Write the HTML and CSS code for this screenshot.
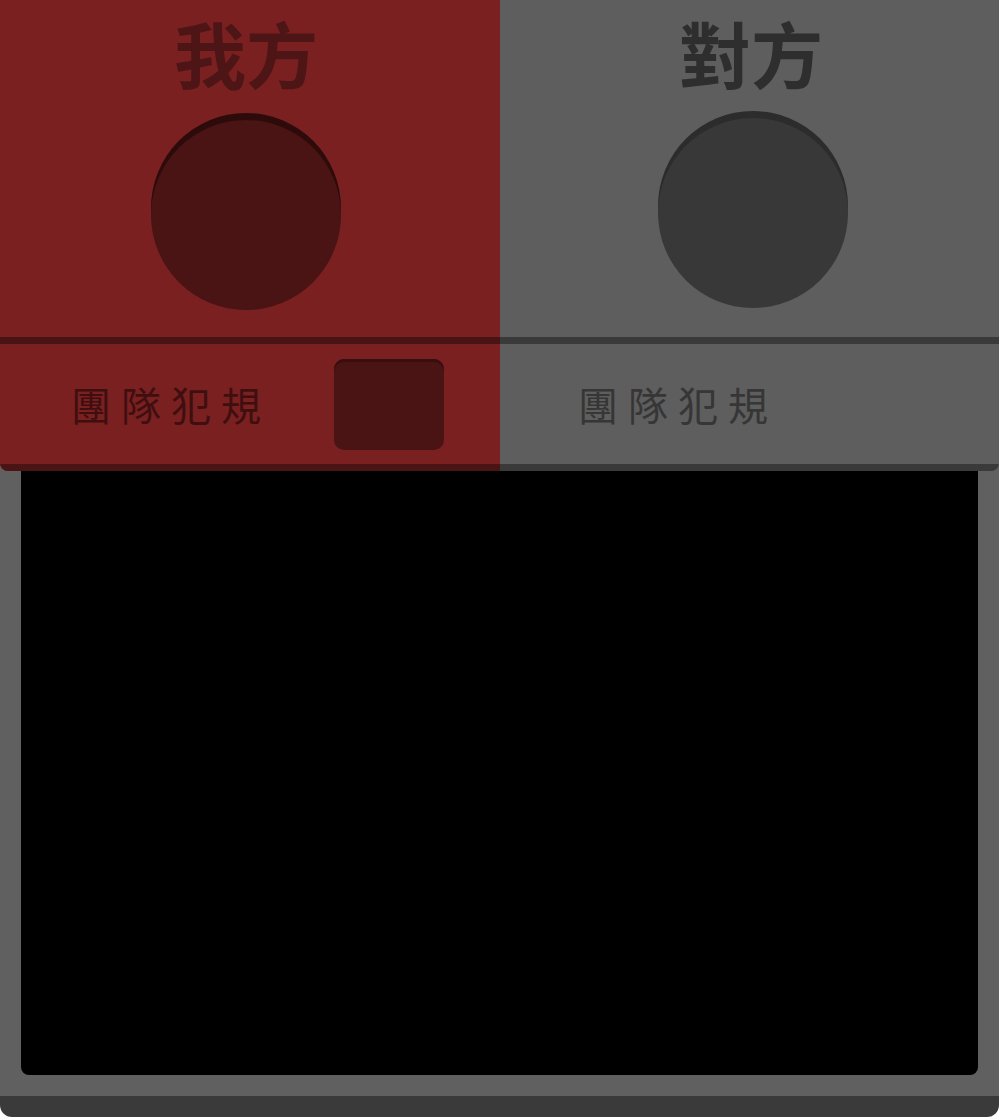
FILE: index.html
```html
<!DOCTYPE html>
<html lang="zh-Hant">
<head>
<meta charset="utf-8">
<title>Scoreboard</title>
<link rel="stylesheet" href="styles.css">
</head>
<body>
<div class="device">
  <div class="header">
    <div class="side side-home">
      <div class="side-top">
        <div class="title">我方</div>
        <div class="score-dot"></div>
      </div>
      <div class="side-bottom">
        <div class="fouls">團隊犯規</div>
        <div class="foul-box"></div>
      </div>
    </div>
    <div class="side side-away">
      <div class="side-top">
        <div class="title">對方</div>
        <div class="score-dot"></div>
      </div>
      <div class="side-bottom">
        <div class="fouls">團隊犯規</div>
      </div>
    </div>
  </div>
  <div class="screen"></div>
</div>
</body>
</html>
```
FILE: styles.css
```css
html, body {
  margin: 0;
  padding: 0;
  background: #ffffff;
}
body {
  font-family: "Noto Sans CJK TC", "Noto Sans CJK SC", sans-serif;
}
.device {
  width: 999px;
  height: 1117px;
  box-sizing: border-box;
  background: #606060;
  border-bottom: 21px solid #3a3a3a;
  border-radius: 0 0 12px 12px;
  padding-bottom: 21px;
  display: flex;
  flex-direction: column;
}
.header {
  display: flex;
  border-radius: 0 0 8px 8px;
  overflow: hidden;
}
.side {
  display: flex;
  flex-direction: column;
}
.side-home {
  width: 500px;
  background: #7a2020;
}
.side-away {
  width: 499px;
  background: #5e5e5e;
}
.side-top {
  height: 344px;
  box-sizing: border-box;
  display: flex;
  flex-direction: column;
  align-items: center;
  padding-top: 16px;
}
.side-home .side-top {
  padding-right: 8px;
  border-bottom: 7px solid #4a1314;
}
.side-away .side-top {
  padding-left: 3px;
  border-bottom: 7px solid #3a3a3a;
}
.title {
  font-size: 72px;
  line-height: 72px;
  font-weight: 700;
  height: 72px;
}
.side-home .title { color: #4d1516; }
.side-away .title { color: #2e2e2e; }
.score-dot {
  width: 190px;
  height: 190px;
  border-radius: 50%;
  margin-top: 32px;
}
.side-home .score-dot {
  background: #4a1314;
  box-shadow: 0 -7px 0 #2e0b0b;
}
.side-away .score-dot {
  background: #383838;
  box-shadow: 0 -7px 0 #2c2c2c;
  margin-left: 4px;
  margin-top: 30px;
}
.side-bottom {
  height: 127px;
  box-sizing: border-box;
  display: flex;
  align-items: center;
}
.side-home .side-bottom {
  border-bottom: 7px solid #4a1314;
  padding-left: 71px;
}
.side-away .side-bottom {
  border-bottom: 7px solid #3a3a3a;
  padding-left: 78px;
}
.fouls {
  font-size: 40px;
  line-height: 40px;
  letter-spacing: 10px;
  font-weight: 400;
}
.side-home .fouls { color: #3f0f10; }
.side-away .fouls { color: #363636; }
.foul-box {
  width: 110px;
  height: 91px;
  border-radius: 10px;
  background: #4a1314;
  box-shadow: inset 0 3px 0 #3a0d0e;
  margin-left: auto;
  margin-right: 56px;
}
.screen {
  flex: 1;
  margin: 0 21px;
  background: #000;
  border-radius: 0 0 8px 8px;
}
```
